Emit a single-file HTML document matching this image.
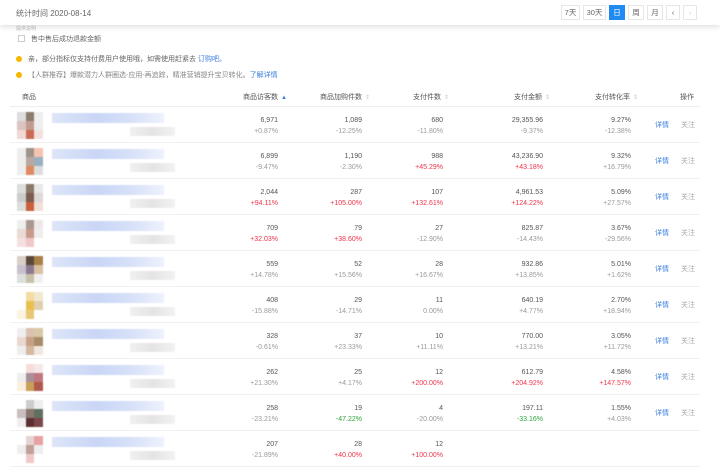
<!DOCTYPE html>
<html><head><meta charset="utf-8"><style>
*{margin:0;padding:0;box-sizing:border-box}
body{width:720px;height:464px;overflow:hidden;background:#fff;font-family:"Liberation Sans","Noto Sans CJK SC",sans-serif;color:#555;position:relative}
.top{position:absolute;left:0;top:0;width:720px;height:25px;background:#fff;box-shadow:0 2px 5px rgba(0,0,0,.12);z-index:5}
.top .t{position:absolute;left:16px;top:8px;font-size:8px;color:#666}
.btns{position:absolute;top:5px;left:561px;display:flex;gap:3px}
.btns span{display:block;height:15px;border:1px solid #e6e6e6;font-size:7.5px;line-height:13px;text-align:center;color:#666;background:#fff}
.btns .on{background:#1f8bf2;color:#fff;border-color:#1f8bf2}
.abs{position:absolute;font-size:7px;white-space:nowrap}
.dot{display:inline-block;width:6px;height:6px;border-radius:50%;background:#f5b800;margin-right:6px;vertical-align:-1px}
.blue{color:#3a7fe0}
.row{position:absolute;left:10px;width:690px;height:36px;border-bottom:1px solid #f0f0f0}
.cell{position:absolute;text-align:right;font-size:7px;line-height:11px;color:#555}
.cell b{font-weight:normal;display:block;color:#999}
.r{color:#f0334a!important}.g{color:#2fa33a!important}
.th{position:absolute;top:92px;font-size:7px;color:#555}
.th i{font-style:normal;color:#ccc;font-size:6px;margin-left:3px}
.thumb{position:absolute;left:7px;top:5px;width:26px;height:27px;display:grid;grid-template-columns:repeat(3,1fr);grid-template-rows:repeat(3,1fr);filter:blur(.6px)}
.title{position:absolute;left:42px;top:6px;width:112px;height:10px;background:linear-gradient(90deg,#dde5fa,#c9d6f6 40%,#d6e0f8 70%,#eef2fc);filter:blur(.6px)}
.gr{position:absolute;left:120px;top:20px;width:45px;height:9px;background:linear-gradient(90deg,#f0f0f0,#e4e4e4,#f2f2f2);filter:blur(.6px)}
.op{position:absolute;font-size:7px;top:13px}
</style></head><body>
<div class="top"><div class="t">统计时间 2020-08-14</div>
<div class="btns"><span style="width:19px">7天</span><span style="width:23px">30天</span><span class="on" style="width:16px">日</span><span style="width:16px">周</span><span style="width:16px">月</span><span style="width:14px">‹</span><span style="width:14px;color:#ccc">›</span></div></div>
<div class="abs" style="left:16px;top:25px;font-size:5px;color:#bbb">提供说明</div>
<div class="abs" style="left:18px;top:34px;color:#666"><span style="display:inline-block;width:7px;height:7px;border:1px solid #ccc;margin-right:6px;vertical-align:-1px"></span>售中售后成功退款金额</div>
<div class="abs" style="left:16px;top:54px;color:#666"><span class="dot"></span>亲，部分指标仅支持付费用户使用哦，如需使用赶紧去 <span class="blue">订购吧。</span></div>
<div class="abs" style="left:16px;top:70px;color:#888"><span class="dot"></span>【人群推荐】爆款潜力人群圈选-应用-再追踪，精准营销提升宝贝转化。<span class="blue">了解详情</span></div>
<div style="position:absolute;left:10px;top:85px;width:690px;height:22px;border-bottom:1px solid #eee"></div>
<div class="th" style="left:22px">商品</div>
<div class="th" style="left:243px">商品访客数<i style="color:#3a7fe0">▲</i></div>
<div class="th" style="left:320px">商品加购件数<i>⇕</i></div>
<div class="th" style="left:413px">支付件数<i>⇕</i></div>
<div class="th" style="left:514px">支付金额<i>⇕</i></div>
<div class="th" style="left:595px">支付转化率<i>⇕</i></div>
<div class="th" style="left:680px">操作</div>
<div id="rows"></div>
<div style="position:absolute;left:455px;top:432px;width:265px;height:32px;background:#fff"></div>
<script>
var D=[
["6,971","+0.87%","","1,089","-12.25%","","680","-11.80%","","29,355.96","-9.37%","","9.27%","-12.38%","",["#ddd","#8a7c6c","#eee","#d9c4c0","#c29a90","#eee","#f0d8d4","#c86a55","#f4e0dc"]],
["6,899","-9.47%","","1,190","-2.30%","","988","+45.29%","r","43,236.90","+43.18%","r","9.32%","+16.79%","",["#eee","#9c948c","#f4c4b0","#eee","#b8a8a0","#9ab0c0","#eee","#e08a60","#ddd"]],
["2,044","+94.11%","r","287","+105.00%","r","107","+132.61%","r","4,961.53","+124.22%","r","5.09%","+27.57%","",["#ddd","#8a7868","#e8e8e8","#ccc","#7a5c50","#e0d8d8","#ddd","#c8603c","#f0e0d8"]],
["709","+32.03%","r","79","+38.60%","r","27","-12.90%","","825.87","-14.43%","","3.67%","-29.56%","",["#eee","#a89890","#f0e8e8","#eadad4","#c89a8a","#eee","#f4e0e0","#f0c8c8","#fff"]],
["559","+14.78%","","52","+15.56%","","28","+16.67%","","932.86","+13.85%","","5.01%","+1.62%","",["#d8d0c8","#5a4838","#a88048","#c8c0cc","#8a7a90","#d8c0a0","#dce0dc","#c8c0a8","#f0f0f0"]],
["408","-15.88%","","29","-14.71%","","11","0.00%","","640.19","+4.77%","","2.70%","+18.94%","",["#fff","#f4dca0","#f0e8d0","#fff","#e8c050","#e0d0b0","#fbf3e0","#e8c878","#fff"]],
["328","-0.61%","","37","+23.33%","","10","+11.11%","","770.00","+13.21%","","3.05%","+11.72%","",["#eee","#dcc0b0","#d8c8a8","#ead8d0","#c8a088","#a88c68","#eee","#d4b8a0","#f0e8e0"]],
["262","+21.30%","","25","+4.17%","","12","+200.00%","r","612.79","+204.92%","r","4.58%","+147.57%","r",["#fff","#f8dcdc","#f4e8e8","#eee","#a89098","#c07880","#fbf0e0","#c8a058","#b0584c"]],
["258","-23.21%","","19","-47.22%","g","4","-20.00%","","197.11","-33.16%","g","1.55%","+4.03%","",["#fff","#ccc","#eee","#c8c0c0","#8a7870","#607060","#eee","#5a3030","#7a4848"]],
["207","-21.89%","","28","+40.00%","r","12","+100.00%","r","","","","","","",["#fff","#e4d4d4","#e8a0a0","#eee","#c0a098","#eee","#fff","#f0c8c8","#fff"]]];
var rights=[268,352,433,533,621],h="";
D.forEach(function(d,i){var top=107+i*36;h+='<div class="row" style="top:'+top+'px"><div class="thumb">'+d[15].map(function(c){return '<div style="background:'+c+'"></div>'}).join('')+'</div><div class="title"></div><div class="gr"></div>';
for(var k=0;k<5;k++){if(!d[k*3])continue;h+='<div class="cell" style="right:'+(690-rights[k])+'px;top:8px">'+d[k*3]+'<b class="'+d[k*3+2]+'">'+d[k*3+1]+'</b></div>';}
if(i<9)h+='<div class="op blue" style="left:645px">详情</div><div class="op" style="left:671px;color:#aaa">关注</div>';
h+='</div>';});
document.getElementById('rows').innerHTML=h;
</script>
</body></html>
